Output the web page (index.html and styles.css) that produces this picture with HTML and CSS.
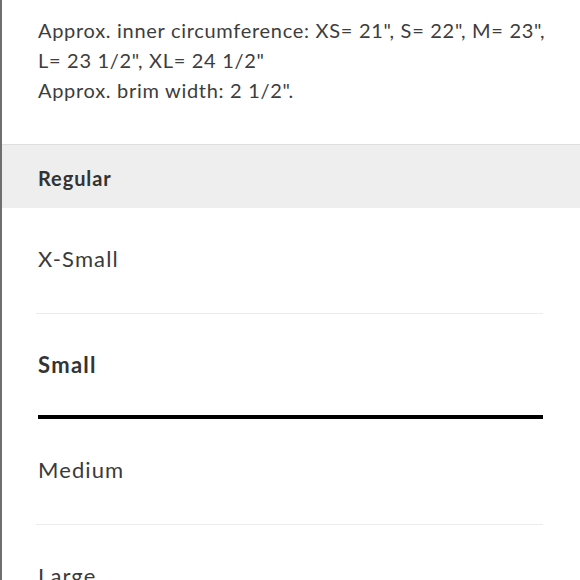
FILE: index.html
```html
<!DOCTYPE html>
<html>
<head>
<meta charset="utf-8">
<link rel="stylesheet" href="styles.css">
</head>
<body>
<div class="page">
  <div class="desc">
    <p>Approx. inner circumference: XS= 21", S= 22", M= 23",</p>
    <p>L= 23 1/2", XL= 24 1/2"</p>
    <p>Approx. brim width: 2 1/2".</p>
  </div>
  <div class="group-head">Regular</div>
  <ul class="sizes">
    <li class="size">X-Small</li>
    <li class="size size--selected">Small</li>
    <li class="size">Medium</li>
    <li class="size">Large</li>
  </ul>
</div>
</body>
</html>
```

FILE: styles.css
```css
html, body {
  margin: 0;
  padding: 0;
  background: #fff;
}

body {
  font-family: Lato, "Open Sans", sans-serif;
  color: #333;
}

.page {
  border-left: 2px solid #6f6f6f;
  min-height: 640px;
  overflow: hidden;
}

.desc {
  padding: 15px 20px 0 36px;
  margin-bottom: 39px;
  font-size: 20px;
  line-height: 30px;
  letter-spacing: 0.7px;
  color: #3d3d3d;
}

.desc p {
  margin: 0;
  white-space: nowrap;
}

.group-head {
  border-top: 1px solid #dedede;
  background: #eeeeee;
  padding: 21px 0 18px 36px;
  font-size: 20px;
  line-height: 24px;
  font-weight: 700;
  letter-spacing: 0.9px;
  color: #333;
}

.sizes {
  list-style: none;
  margin: 0 37px 0 34px;
  padding: 0;
}

.size {
  padding: 38px 0 41px 2px;
  font-size: 22px;
  line-height: 26px;
  letter-spacing: 1.1px;
  border-bottom: 1px solid #ececec;
  color: #3a3a3a;
}

.size--selected {
  font-weight: 700;
  letter-spacing: 1.3px;
  padding-bottom: 37px;
  border-bottom: 4px solid #000;
  margin-left: 2px;
  padding-left: 0;
  color: #333;
}
```
